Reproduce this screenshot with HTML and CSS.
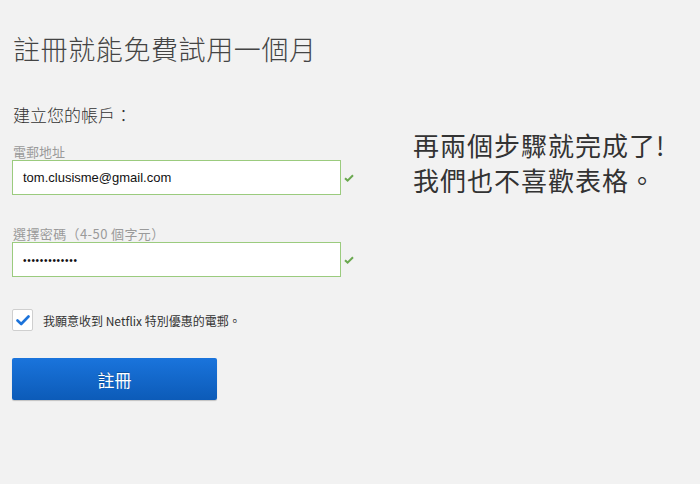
FILE: index.html
```html
<!DOCTYPE html>
<html lang="zh-Hant">
<head>
<meta charset="utf-8">
<link rel="stylesheet" href="styles.css">
</head>
<body>
<div class="page">
  <div class="form-col">
    <h1 class="title">註冊就能免費試用一個月</h1>
    <p class="subtitle">建立您的帳戶：</p>
    <div class="field">
      <label class="label">電郵地址</label>
      <div class="input-row">
        <div class="input">tom.clusisme@gmail.com</div>
        <svg class="ok" width="10" height="8" viewBox="0 0 10 8"><path d="M1 4.2 L3.6 6.6 L9 1.2" fill="none" stroke="#6aa84f" stroke-width="2"/></svg>
      </div>
    </div>
    <div class="field field-2">
      <label class="label">選擇密碼（4-50 個字元）</label>
      <div class="input-row">
        <div class="input dots">•••••••••••••</div>
        <svg class="ok" width="10" height="8" viewBox="0 0 10 8"><path d="M1 4.2 L3.6 6.6 L9 1.2" fill="none" stroke="#6aa84f" stroke-width="2"/></svg>
      </div>
    </div>
    <div class="consent">
      <span class="box"><svg width="14" height="11" viewBox="0 0 14 11"><path d="M1.5 5.5 L5.2 9 L12.5 1.5" fill="none" stroke="#1c73da" stroke-width="2.6" stroke-linecap="round" stroke-linejoin="round"/></svg></span>
      <span class="consent-text">我願意收到 Netflix 特別優惠的電郵。</span>
    </div>
    <button class="submit">註冊</button>
  </div>
  <div class="promo">
    <p>再兩個步驟就完成了!<br>我們也不喜歡表格。</p>
  </div>
</div>
</body>
</html>
```

FILE: styles.css
```css
html, body {
  margin: 0;
  padding: 0;
  background: #f2f2f2;
  height: 100%;
}
body {
  font-family: "Noto Sans CJK TC", "Noto Sans CJK SC", sans-serif;
  color: #333;
}
.page {
  display: flex;
  padding-top: 33px;
  height: 484px;
  box-sizing: border-box;
}
.form-col {
  width: 360px;
  padding-left: 12px;
  box-sizing: border-box;
  display: flex;
  flex-direction: column;
  align-items: flex-start;
  flex-shrink: 0;
}
.title {
  margin: 0 0 0 1px;
  font-size: 27px;
  line-height: 32px;
  font-weight: 300;
  color: #444;
  letter-spacing: 0.6px;
}
.subtitle {
  margin: 39px 0 0 1px;
  font-size: 17px;
  line-height: 22px;
  font-weight: 300;
  color: #333;
}
.field {
  margin-top: 18px;
}
.field-2 {
  margin-top: 31px;
}
.label {
  display: block;
  margin-left: 1px;
  font-size: 13px;
  line-height: 16px;
  color: #9a9a9a;
}
.field-2 .label {
  letter-spacing: 0.4px;
}
.input-row {
  display: flex;
  align-items: center;
  gap: 3px;
}
.input {
  width: 329px;
  height: 35px;
  box-sizing: border-box;
  border: 1px solid #9bcb7e;
  background: #fff;
  padding: 0 10px;
  display: flex;
  align-items: center;
  font-family: "Liberation Sans", "Noto Sans CJK TC", sans-serif;
  font-size: 13px;
  color: #111;
}
.dots {
  font-size: 10px;
  letter-spacing: 0.7px;
  padding-top: 1px;
}
.ok {
  display: block;
}
.consent {
  margin-top: 32px;
  display: flex;
  align-items: center;
  gap: 10px;
}
.box {
  width: 21px;
  height: 22px;
  box-sizing: border-box;
  border: 1px solid #cfcfcf;
  border-radius: 2px;
  background: #fff;
  display: flex;
  align-items: center;
  justify-content: center;
}
.consent-text {
  font-size: 12px;
  color: #333;
}
.submit {
  margin-top: 27px;
  width: 205px;
  height: 42px;
  border: none;
  border-radius: 2px;
  background: linear-gradient(#1a74dc, #0c5bb8);
  color: #fff;
  font-family: "Noto Sans CJK TC", sans-serif;
  font-size: 17px;
  text-shadow: 0 -1px 0 rgba(0,0,0,0.25);
  box-shadow: 0 1px 1px rgba(0,0,0,0.2);
  padding: 0;
}
.promo {
  margin-left: 53px;
  padding-top: 94px;
}
.promo p {
  margin: 0;
  font-size: 26px;
  line-height: 35px;
  letter-spacing: 1px;
  color: #333;
}
```
